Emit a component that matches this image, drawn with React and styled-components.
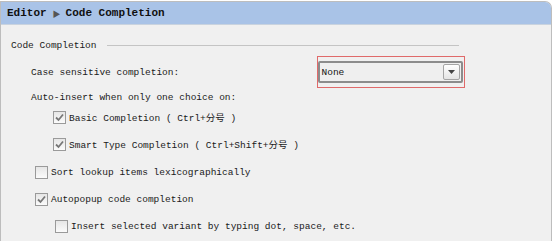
import React from 'react'
import styled, { createGlobalStyle } from 'styled-components'

const Global = createGlobalStyle`
html, body { margin:0; padding:0; background:#ffffff; }
body { width:554px; height:241px; overflow:hidden; }
`

const Panel = styled.div`
margin:1px 2px 0 0;
height:240px;
border:1px solid #bdbdbd;
border-bottom:none;
border-top-right-radius:7px;
background:#f0f0f0;
overflow:hidden;
font-family:"Liberation Mono", "Noto Sans CJK SC", monospace;
color:#1a1a1a;
`

const Header = styled.div`
height:22px;
background:#a9c3e7;
border-bottom:1px solid #c9d3df;
display:flex;
align-items:center;
padding-left:6px;
font-size:11px;
font-weight:bold;
color:#101010;
`

const Crumb = styled.span`
font-size:8px;
color:#555;
margin:0 5px 0 6px;
`

const Body = styled.div`
padding-top:10px;
display:flex;
flex-direction:column;
`

const Legend = styled.div`
height:20px;
display:flex;
align-items:center;
padding-left:10px;
font-size:9.5px;
gap:10px;
`

const Rule = styled.div`
width:352px;
height:1px;
background:#c4c4c4;
`

const Row = styled.div`
height:${p => p.h}px;
display:flex;
align-items:center;
padding-left:${p => p.indent}px;
font-size:9.5px;
white-space:nowrap;
`

const Label = styled.span`
width:286px;
`

const Highlight = styled.div`
width:146px;
height:30px;
border:1px solid #e06a6a;
display:flex;
align-items:center;
justify-content:center;
`

const Combo = styled.div`
width:138px;
height:18px;
border:2px solid #8c8c8c;
border-radius:2px;
background:#efefef;
display:flex;
align-items:center;
justify-content:space-between;
padding:0 1px 0 2px;
box-sizing:content-box;
margin-left:-2px;
font-size:9.5px;
color:#111;
`

const ComboButton = styled.div`
width:15px;
height:14px;
border:1px solid #a5a5a5;
border-radius:2px;
background:linear-gradient(#ffffff, #e4e4e4);
display:flex;
align-items:center;
justify-content:center;
`

const Box = styled.span`
width:11px;
height:11px;
border:1px solid #9a9a9a;
background:linear-gradient(#e6e6e6, #fbfbfb);
margin-right:3px;
display:inline-flex;
align-items:center;
justify-content:center;
flex-shrink:0;
`

function Check({ on }) {
  return (
    <Box>
      {on && (
        <svg width="9" height="9" viewBox="0 0 9 9">
          <path d="M1 4.5 L3.5 7 L8 1.5" fill="none" stroke="#777" strokeWidth="1.8" />
        </svg>
      )}
    </Box>
  )
}

export default function App() {
  return (
    <>
      <Global />
      <Panel>
        <Header>
          Editor<Crumb>▶</Crumb>Code Completion
        </Header>
        <Body>
          <Legend>
            Code Completion
            <Rule />
          </Legend>
          <Row h={34} indent={30}>
            <Label>Case sensitive completion:</Label>
            <Highlight>
              <Combo>
                None
                <ComboButton>
                  <svg width="7" height="4" viewBox="0 0 7 4">
                    <path d="M0 0 H7 L3.5 4 Z" fill="#444" />
                  </svg>
                </ComboButton>
              </Combo>
            </Highlight>
          </Row>
          <Row h={16} indent={30}>Auto-insert when only one choice on:</Row>
          <Row h={24} indent={52}>
            <Check on />Basic Completion ( Ctrl+分号 )
          </Row>
          <Row h={30} indent={52}>
            <Check on />Smart Type Completion ( Ctrl+Shift+分号 )
          </Row>
          <Row h={27} indent={34}>
            <Check />Sort lookup items lexicographically
          </Row>
          <Row h={26} indent={34}>
            <Check on />Autopopup code completion
          </Row>
          <Row h={28} indent={54}>
            <Check />Insert selected variant by typing dot, space, etc.
          </Row>
        </Body>
      </Panel>
    </>
  )
}
